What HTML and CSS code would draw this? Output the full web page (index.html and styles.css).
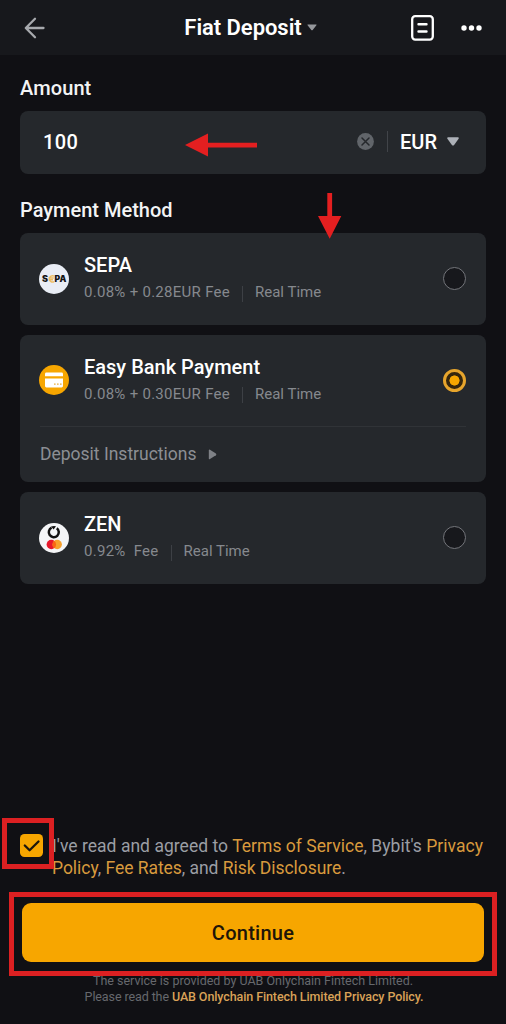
FILE: index.html
```html
<!DOCTYPE html>
<html lang="en">
<head>
<meta charset="utf-8">
<title>Fiat Deposit</title>
<link rel="stylesheet" href="styles.css">
</head>
<body>
<div class="screen">
  <header class="topbar">
    <svg class="back" width="22" height="22" viewBox="0 0 22 22"><path d="M19.5 11H2M11 1.8L1.8 11L11 20.2" fill="none" stroke="#a7a9ad" stroke-width="2.3" stroke-linecap="round" stroke-linejoin="round"/></svg>
    <div class="title"><span class="title-text">Fiat Deposit</span><svg width="10" height="7" viewBox="0 0 10 7"><path d="M.8.5h8.4q.7.2.2.8L5.7 5.9q-.7.7-1.4 0L.6 1.3Q.1.7.8.5z" fill="#95979b"/></svg></div>
    <div class="actions">
      <svg width="23" height="26" viewBox="0 0 23 26" fill="none" stroke="#fff" stroke-linecap="round"><rect x="1.2" y="1.2" width="20.6" height="23.4" rx="3" stroke-width="2.3"/><path d="M7.5 9.2h8M7.5 16.5h8" stroke-width="2.4"/></svg>
      <svg width="21" height="6" viewBox="0 0 21 6" fill="#fff"><circle cx="3" cy="3" r="2.7"/><circle cx="10.5" cy="3" r="2.7"/><circle cx="18" cy="3" r="2.7"/></svg>
    </div>
  </header>

  <main class="content">
    <h2 class="label amount-label">Amount</h2>
    <div class="field">
      <span class="value">100</span>
      <svg class="clear" width="17" height="17" viewBox="0 0 17 17"><circle cx="8.5" cy="8.5" r="8.4" fill="#61656a"/><path d="M5 5l7 7M12 5l-7 7" stroke="#25282c" stroke-width="1.5" stroke-linecap="round"/></svg>
      <i class="field-divider"></i>
      <span class="currency">EUR</span>
      <svg width="12" height="9" viewBox="0 0 12 9"><path d="M1.1.2h9.8q1.4.2.7 1.5L7.1 7.9q-1.1 1.2-2.2 0L.4 1.7Q-.2.4 1.1.2z" fill="#adb1b8"/></svg>
    </div>

    <h2 class="label method-label">Payment Method</h2>
    <div class="methods">
      <section class="card">
        <div class="row">
          <svg class="logo" width="30" height="30" viewBox="0 0 30 30"><circle cx="15" cy="15" r="15" fill="#e9edf5"/><text x="3" y="18.2" class="sepa-text" textLength="6" lengthAdjust="spacingAndGlyphs">S</text><path d="M15 12.2A3.1 3.1 0 1 0 15 17.6M9.6 14.1h5.1M9.6 15.8h4.4" fill="none" stroke="#efbd62" stroke-width="1.5"/><text x="15.6" y="18.2" class="sepa-text" textLength="11.8" lengthAdjust="spacingAndGlyphs">PA</text></svg>
          <div class="info"><div class="name">SEPA</div><div class="meta"><span class="fee">0.08% + 0.28EUR Fee</span><i></i><span class="time">Real Time</span></div></div>
          <span class="radio"></span>
        </div>
      </section>
      <section class="card selected">
        <div class="row">
          <svg class="logo" width="30" height="30" viewBox="0 0 30 30"><circle cx="15" cy="15" r="15" fill="#f7a600"/><path d="M7.4 7.6h15.2q1.4 0 1.4 1.4v2.2H6V9q0-1.4 1.4-1.4zM6 13.4h18V21q0 1.4-1.4 1.4H7.4Q6 22.4 6 21z" fill="#fff"/><path d="M15 19.1h1.6M18 19.1h1.6M21 19.1h1.6" stroke="#e9ad3b" stroke-width="1.4"/></svg>
          <div class="info"><div class="name">Easy Bank Payment</div><div class="meta"><span class="fee">0.08% + 0.30EUR Fee</span><i></i><span class="time">Real Time</span></div></div>
          <span class="radio checked"></span>
        </div>
        <div class="instructions"><span>Deposit Instructions</span><svg width="9" height="11" viewBox="0 0 9 11"><path d="M.8 1.4Q.9.2 2 .8l5.9 3.8q1 .9 0 1.7L2 10.1q-1.1.5-1.2-.7z" fill="#7e8186"/></svg></div>
      </section>
      <section class="card">
        <div class="row">
          <svg class="logo" width="30" height="30" viewBox="0 0 30 30"><circle cx="15" cy="15" r="15" fill="#f4f5f7"/><path d="M17.8 5.2A5 5 0 1 1 12.6 4.7" fill="none" stroke="#111" stroke-width="2.5"/><path d="M12 3.6Q14.5 2.4 17 3.2L14.6 6.6z" fill="#111"/><circle cx="12.3" cy="21.5" r="4.7" fill="#e7192c"/><circle cx="18.2" cy="21.5" r="4.7" fill="#f8a12c"/><path d="M15.25 17.8a4.7 4.7 0 0 1 0 7.4a4.7 4.7 0 0 1 0-7.4z" fill="#fa6414"/></svg>
          <div class="info"><div class="name">ZEN</div><div class="meta"><span class="fee">0.92%&nbsp; Fee</span><i></i><span class="time">Real Time</span></div></div>
          <span class="radio"></span>
        </div>
      </section>
    </div>
  </main>

  <footer class="footer">
    <div class="agree">
      <svg class="check" width="23" height="23" viewBox="0 0 23 23"><rect width="23" height="23" rx="4.5" fill="#f7a600"/><path d="M4.8 11.5l4.8 4.7 8.9-8.7" fill="none" stroke="#1c160c" stroke-width="2.3" stroke-linecap="round" stroke-linejoin="round"/></svg>
      <p class="terms"><span class="line t1">I've read and agreed to <a>Terms of Service</a>, Bybit's <a>Privacy</a></span><span class="line t2"><a>Policy</a>, <a>Fee Rates</a>, and <a>Risk Disclosure</a>.</span></p>
    </div>
    <button class="continue">Continue</button>
    <p class="legal"><span class="line l1">The service is provided by UAB Onlychain Fintech Limited.</span><span class="line l2">Please read the <b>UAB Onlychain Fintech Limited Privacy Policy.</b></span></p>
  </footer>

  <svg class="arrow arrow-left" width="72" height="24" viewBox="0 0 72 24"><path d="M0 12L23 .5V9.8H72v4.6H23v9.1z" fill="#e41f20"/></svg>
  <svg class="arrow arrow-down" width="24" height="46" viewBox="0 0 24 46"><path d="M9.3 0h4.8v23h9.2L11.7 45.8 0 23h9.3z" fill="#e41f20"/></svg>
  <div class="mark mark-check"></div>
  <div class="mark mark-button"></div>
</div>
</body>
</html>
```
FILE: styles.css
```css
* { box-sizing: border-box; }
body { margin: 0; background: #101014; font-family: Roboto, "Noto Sans", sans-serif; color: #fff; }
h2, p { margin: 0; }
.screen { position: relative; width: 506px; height: 1024px; overflow: hidden; display: flex; flex-direction: column; }

.topbar { height: 55px; flex: none; background: #17181c; display: grid; grid-template-columns: 1fr auto 1fr; align-items: center; padding: 0 24px; }
.title { display: flex; align-items: center; gap: 5px; padding-right: 5px; }
.title-text { font-size: 22px; font-weight: 600; line-height: 26px; white-space: nowrap; letter-spacing: -.05px; }
.actions { display: flex; align-items: center; justify-content: flex-end; gap: 27px; }

.content { padding: 0 20px; }
.label { font-size: 20px; font-weight: 500; line-height: 24px; color: #f3f4f5; }
.amount-label { margin-top: 21px; letter-spacing: .1px; }
.field { margin-top: 11px; height: 63px; border-radius: 8px; background: #25282c; display: flex; align-items: center; padding: 0 27px 2px 23px; }
.value { font-size: 20px; font-weight: 500; flex: 1; letter-spacing: .4px; }
.field-divider { width: 1px; height: 21px; background: #414449; margin: 0 12px 0 13px; }
.currency { font-size: 20px; font-weight: 500; margin-right: 10px; }
.method-label { margin-top: 24px; }
.methods { margin-top: 11px; display: flex; flex-direction: column; gap: 10px; }
.card { background: #25282c; border-radius: 8px; padding: 0 20px; height: 91.5px; }
.card.selected { height: 147.5px; }
.row { height: 91px; display: flex; align-items: center; }
.logo { margin-left: -1px; margin-right: 15px; }
.sepa-text { font: 900 8.5px Inter, Roboto, sans-serif; fill: #151515; }
.info { flex: 1; padding-bottom: 2px; }
.name { font-size: 20px; font-weight: 500; line-height: 24px; }
.meta { display: flex; align-items: center; font-size: 15px; line-height: 20px; color: #86898e; margin-top: 5px; letter-spacing: .28px; }
.meta i { width: 1px; height: 16px; background: #3d4045; margin: 3px 12px 0; }
.time { letter-spacing: 0; }
.radio { width: 23px; height: 23px; border: 1px solid #74767b; border-radius: 50%; background: #17181c; }
.radio.checked { border: 3px solid #e7a52c; background: radial-gradient(circle, #f7a600 0 4.8px, #35260d 5.3px) border-box; }
.instructions { border-top: 1px solid #303337; height: 56px; display: flex; align-items: center; gap: 11px; font-size: 17.5px; color: #8c8f94; }

.footer { margin-top: auto; height: 190px; padding: 0 20px; }
.agree { display: flex; gap: 9px; }
.check { flex: none; }
.line { display: block; white-space: nowrap; }
.terms { font-size: 17.5px; line-height: 22px; color: #9b9ea4; padding-top: 1px; }
.t1 { letter-spacing: .03px; }
.t2 { letter-spacing: -.04px; }
.terms a { color: #d89a3d; }
.continue { display: block; margin: 24px 2px 0; width: 462px; height: 59px; border: 0; border-radius: 9px; background: #f7a600; color: #201508; font: 500 20px Roboto, sans-serif; letter-spacing: .25px; }
.legal { margin-top: 11px; text-align: center; font-size: 12.5px; line-height: 16px; color: #66686d; }
.l2 { letter-spacing: -.1px; padding-left: 2px; }
.legal b { font-weight: 500; color: #d9a258; }

.arrow, .mark { position: absolute; }
.arrow-left { left: 185px; top: 133px; }
.arrow-down { left: 318px; top: 193px; }
.mark { border: 5px solid #dc2022; }
.mark-check { left: 2px; top: 818px; width: 52px; height: 51px; }
.mark-button { left: 9px; top: 892px; width: 488px; height: 84px; }
```
